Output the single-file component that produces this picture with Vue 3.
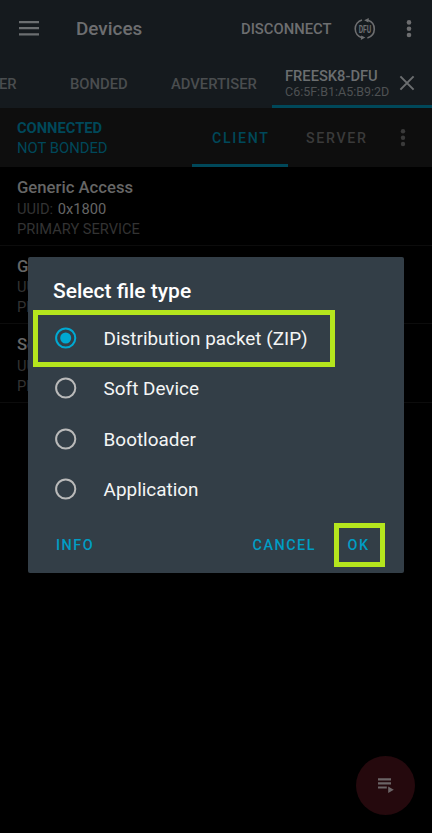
<script setup>
import { ref } from 'vue'

const services = [
  { name: 'Generic Access', uuid: '0x1800' },
  { name: 'Generic Attribute', uuid: '0x1801' },
  { name: 'Secure DFU Service', uuid: '0xFE59' },
]
const options = ['Distribution packet (ZIP)', 'Soft Device', 'Bootloader', 'Application']
const selected = ref(0)
</script>

<template>
  <div class="screen">
    <header class="appbar">
      <svg class="menu" width="20" height="15" viewBox="0 0 20 15"><path d="M0 1.2h20M0 7.2h20M0 13.4h20" stroke="currentColor" stroke-width="2.3" /></svg>
      <h1>Devices</h1>
      <span class="disconnect">DISCONNECT</span>
      <svg class="dfu" width="22" height="22" viewBox="0 0 22 22">
        <g fill="none" stroke="currentColor" stroke-width="1.6">
          <path d="M8 1.9A9.3 9.3 0 0 0 8 19.8" />
          <path d="M14 2.2A9.3 9.3 0 0 1 13.4 20" />
        </g>
        <path d="M10.2 2.2L14.8 0l-.4 4.4zM11.4 19.6L6.8 21.9l.4-4.4z" fill="currentColor" />
        <text x="11" y="14.7" text-anchor="middle" textLength="12.6" lengthAdjust="spacingAndGlyphs">DFU</text>
      </svg>
      <svg class="more" width="6" height="20" viewBox="0 0 6 20"><g fill="currentColor"><circle cx="3" cy="3.4" r="2.3" /><circle cx="3" cy="9.7" r="2.3" /><circle cx="3" cy="16" r="2.3" /></g></svg>
    </header>

    <nav class="tabs">
      <span class="tab scanner">ER</span>
      <span class="tab bonded">BONDED</span>
      <span class="tab advertiser">ADVERTISER</span>
      <div class="device">
        <div class="device-text">
          <span class="device-name">FREESK8-DFU</span>
          <span class="device-mac">C6:5F:B1:A5:B9:2D</span>
        </div>
        <svg width="16" height="16" viewBox="0 0 16 16"><path d="M1.4 1.4l13.2 13.2M14.6 1.4L1.4 14.6" stroke="currentColor" stroke-width="2" /></svg>
      </div>
    </nav>

    <section class="status">
      <div class="state">
        <strong>CONNECTED</strong>
        <span>NOT BONDED</span>
      </div>
      <span class="role active">CLIENT</span>
      <span class="role server">SERVER</span>
      <svg class="role-more" width="6" height="20" viewBox="0 0 6 20"><g fill="currentColor"><circle cx="3" cy="3.2" r="2.2" /><circle cx="3" cy="9.7" r="2.2" /><circle cx="3" cy="16" r="2.2" /></g></svg>
    </section>

    <ul class="services">
      <li v-for="s in services" :key="s.uuid">
        <h2>{{ s.name }}</h2>
        <p>UUID: <b>{{ s.uuid }}</b></p>
        <p class="kind">PRIMARY SERVICE</p>
      </li>
    </ul>

    <button class="fab">
      <svg width="16" height="15" viewBox="0 0 16 15"><path d="M0 1.3h13M0 5.3h13M0 9.5h8.8" stroke="currentColor" stroke-width="2.2" /><path d="M10.2 8.6l5.6 3.2-5.6 3.1z" fill="currentColor" /></svg>
    </button>

    <div class="dialog">
      <h3>Select file type</h3>
      <div class="options">
        <div v-for="(o, i) in options" :key="o" class="option" :class="{ on: selected === i }" @click="selected = i">
          <svg width="22" height="22" viewBox="0 0 22 22">
            <circle cx="10.7" cy="11" r="9.6" fill="none" stroke="currentColor" stroke-width="2" />
            <circle v-if="selected === i" cx="10.7" cy="11" r="5.5" fill="currentColor" />
          </svg>
          <span>{{ o }}</span>
        </div>
      </div>
      <div class="actions">
        <span class="info">INFO</span>
        <span class="cancel">CANCEL</span>
        <span class="ok">OK</span>
      </div>
      <div class="mark mark-option"></div>
      <div class="mark mark-ok"></div>
    </div>
  </div>
</template>

<style>
body { background: #000; }
</style>

<style scoped>
* { box-sizing: border-box; margin: 0; padding: 0; }
.screen { position: relative; width: 432px; height: 833px; overflow: hidden; background: #000; font-family: Roboto, "Liberation Sans", sans-serif; white-space: nowrap; }
svg { display: block; flex: none; overflow: visible; }

.appbar { display: flex; align-items: center; height: 57px; padding-left: 19px; background: #151a1e; color: #6d6e70; }
.menu { color: #6b6e70; }
h1 { width: 165px; margin-left: 37px; font-size: 18.9px; font-weight: 500; line-height: 24px; padding-top: 1px; }
.disconnect { width: 90px; font-size: 14.8px; font-weight: 500; padding-top: 1px; }
.dfu { margin-left: 23px; }
.dfu text { font: 700 10.6px Roboto, sans-serif; fill: currentColor; }
.more { margin-left: 30px; }

.tabs { display: flex; align-items: center; height: 51px; background: #151a1e; color: #4a4d4f; }
.tab { flex: none; font-size: 14.8px; font-weight: 500; padding-top: 2px; }
.scanner { width: 71px; margin-left: -1px; }
.bonded { width: 101px; }
.advertiser { width: 101px; }
.device { display: flex; flex: none; align-items: center; width: 160px; height: 51px; padding: 5px 0 0 13px; border-bottom: 3px solid #00485a; color: #6b6e70; }
.device-text { display: flex; flex-direction: column; width: 114px; }
.device-name { font-size: 14.7px; font-weight: 500; line-height: 16px; }
.device-mac { font-size: 12.5px; line-height: 15px; color: #4e5153; }
.device svg { margin-bottom: 2px; }

.status { display: flex; align-items: center; height: 59px; padding-left: 17px; background: #0e0e0e; color: #00485a; }
.state { display: flex; flex-direction: column; width: 175px; font-size: 14.8px; line-height: 20px; }
.state strong { font-weight: 700; font-size: 14.7px; }
.role { display: flex; align-items: center; font-size: 14.2px; font-weight: 500; letter-spacing: 1.7px; height: 59px; }
.active { width: 96px; padding-left: 20px; padding-top: 3px; border-bottom: 3px solid #00485a; }
.server { width: 94px; padding-left: 18px; color: #3a3a3a; }
.role-more { margin-left: 17.5px; color: #3a3a3a; }

.services { list-style: none; }
.services li { height: 78.5px; padding: 10px 17px 0; border-bottom: 1px solid #0c0c0c; color: #333; }
h2 { font-size: 16.7px; font-weight: 500; line-height: 22px; color: #666; }
p { font-size: 14.65px; line-height: 20px; margin-top: -0.5px; }
p + p { margin-top: 0; }
p b { font-weight: 400; color: #666; margin-left: 1px; }

.fab { position: absolute; left: 356px; top: 756px; display: flex; align-items: center; justify-content: center; width: 59px; height: 59px; border: 0; border-radius: 50%; background: #25090d; color: #6b6466; }

.dialog { position: absolute; left: 28px; top: 257px; width: 376px; height: 316px; padding-top: 21px; border-radius: 2px; background: #333e47; color: #fff; }
h3 { padding-left: 25px; font-size: 21px; font-weight: 500; line-height: 26px; }
.options { padding-top: 9px; }
.option { display: flex; align-items: center; height: 50.3px; padding-left: 27px; color: #bababa; }
.option.on { color: #00a9d2; }
.option span { margin-left: 26.6px; color: #f4f5f5; font-size: 18.9px; padding-top: 1px; }
.actions { display: flex; align-items: center; height: 63px; color: #009dc4; font-size: 14.4px; font-weight: 500; letter-spacing: 1.5px; }
.info { width: 196.5px; margin-left: 28px; }
.cancel { width: 95px; }
.mark { position: absolute; border: 5px solid #b5e61d; }
.mark-option { left: 5px; top: 53px; width: 302px; height: 57px; }
.mark-ok { left: 306px; top: 266px; width: 51px; height: 44px; }
</style>
